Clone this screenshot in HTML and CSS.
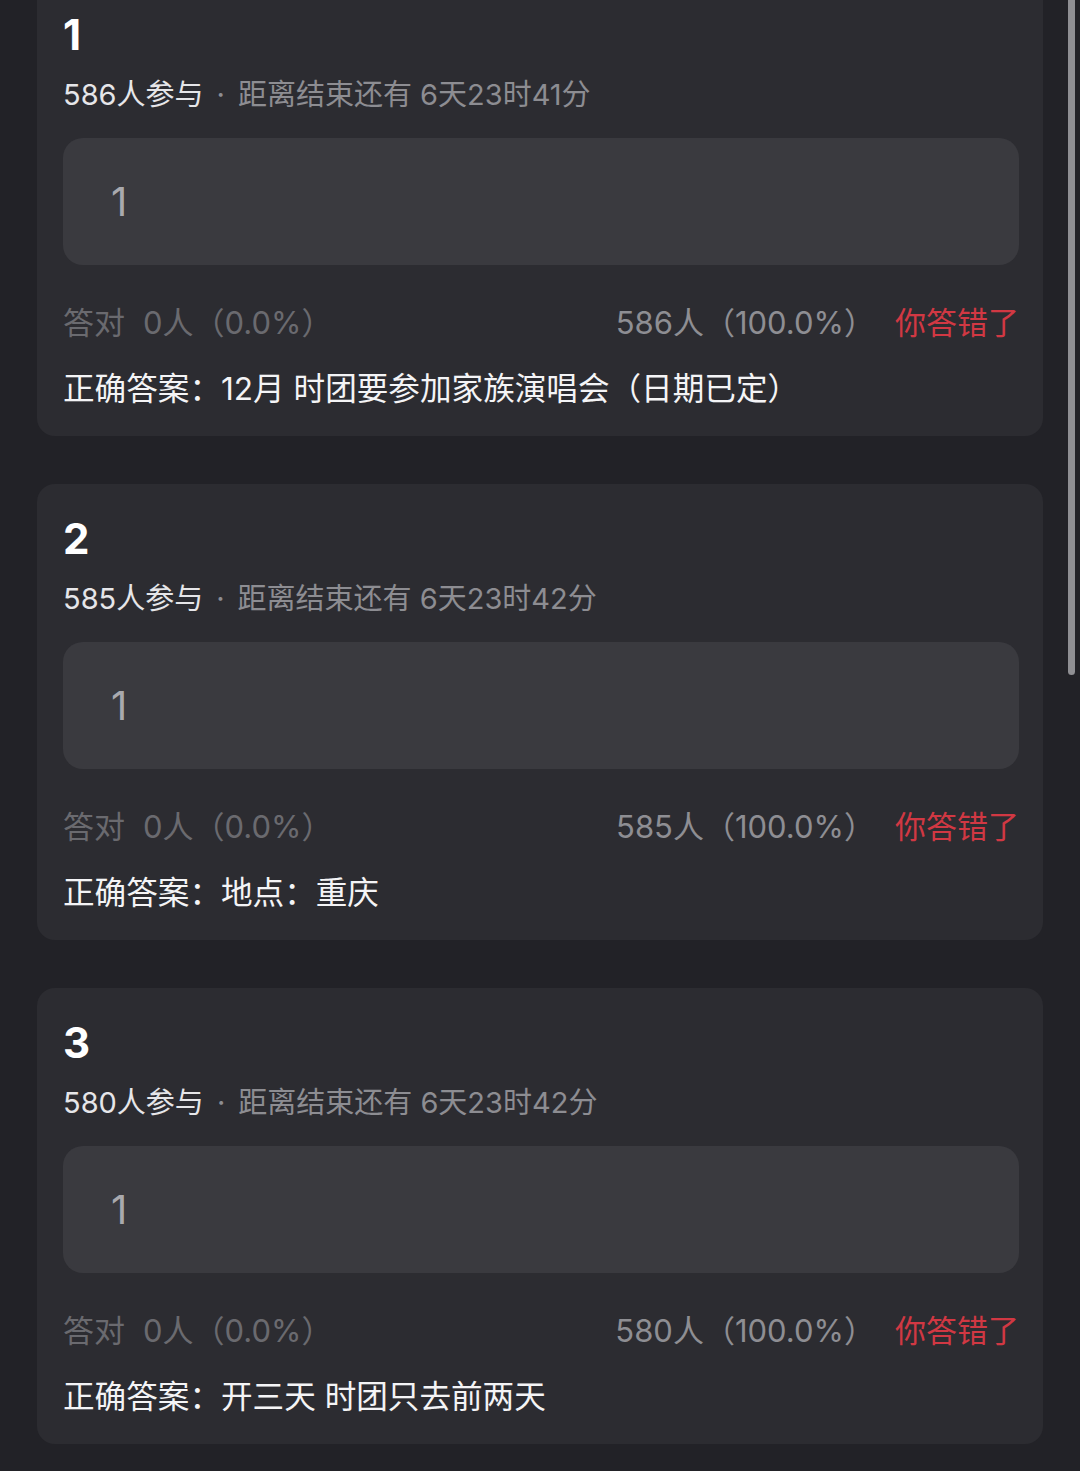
FILE: index.html
```html
<!DOCTYPE html>
<html lang="zh-CN">
<head>
    <meta charset="UTF-8">
    <meta name="viewport" content="width=device-width, initial-scale=1.0">
    <title>竞猜结果</title>
    <link rel="stylesheet" href="styles.css">
</head>
<body>
    <div class="list">
        <div class="card">
            <div class="q-num">1</div>
            <div class="meta"><span class="count">586人参与</span><span class="dot">·</span>距离结束还有 6天23时41分</div>
            <div class="option">1</div>
            <div class="stats">
                <div class="right-count"><span class="label">答对</span>0人（0.0%）</div>
                <div class="wrong-side"><span class="wrong-count">586人（100.0%）</span><span class="wrong">你答错了</span></div>
            </div>
            <div class="correct">正确答案：12月 时团要参加家族演唱会（日期已定）</div>
        </div>

        <div class="card">
            <div class="q-num">2</div>
            <div class="meta"><span class="count">585人参与</span><span class="dot">·</span>距离结束还有 6天23时42分</div>
            <div class="option">1</div>
            <div class="stats">
                <div class="right-count"><span class="label">答对</span>0人（0.0%）</div>
                <div class="wrong-side"><span class="wrong-count">585人（100.0%）</span><span class="wrong">你答错了</span></div>
            </div>
            <div class="correct">正确答案：地点：重庆</div>
        </div>

        <div class="card">
            <div class="q-num">3</div>
            <div class="meta"><span class="count">580人参与</span><span class="dot">·</span>距离结束还有 6天23时42分</div>
            <div class="option">1</div>
            <div class="stats">
                <div class="right-count"><span class="label">答对</span>0人（0.0%）</div>
                <div class="wrong-side"><span class="wrong-count">580人（100.0%）</span><span class="wrong">你答错了</span></div>
            </div>
            <div class="correct">正确答案：开三天 时团只去前两天</div>
        </div>
    </div>
    <div class="scrollbar"></div>
</body>
</html>
```

FILE: styles.css
```css
body {
    margin: 0;
    background-color: #222227;
    font-family: Inter, "Noto Sans CJK SC", sans-serif;
    color: #f2f2f4;
    overflow: hidden;
}

.list {
    display: flex;
    flex-direction: column;
    gap: 48px;
    padding: 0 37px;
    margin-top: -20px;
}

.card {
    background-color: #2c2c31;
    border-radius: 18px;
    padding: 30px 24px 25px 26px;
}

.q-num {
    font-size: 42px;
    font-weight: 700;
    line-height: 50px;
    color: #ffffff;
}

.meta {
    margin-top: 15px;
    font-size: 29px;
    line-height: 40px;
    color: #8d8d92;
}

.meta .count {
    color: #e6e6e9;
}

.meta .dot {
    margin: 0 13px;
}

.option {
    margin-top: 23px;
    height: 127px;
    border-radius: 20px;
    background-color: #3a3a3f;
    display: flex;
    align-items: center;
    padding-left: 48px;
    font-size: 40px;
    color: #a9a9ae;
}

.stats {
    margin-top: 36px;
    display: flex;
    justify-content: space-between;
    font-size: 31px;
    line-height: 44px;
}

.right-count {
    color: #6a6a6f;
}

.right-count .label {
    margin-right: 18px;
}

.wrong-count {
    color: #8e8e93;
}

.wrong {
    margin-left: 20px;
    color: #d13843;
}

.correct {
    margin-top: 22px;
    font-size: 31.6px;
    line-height: 44px;
    color: #f4f4f6;
}

.scrollbar {
    position: fixed;
    top: 0;
    right: 5px;
    width: 7px;
    height: 675px;
    border-radius: 0 0 4px 4px;
    background-color: #8f8f93;
}
```
